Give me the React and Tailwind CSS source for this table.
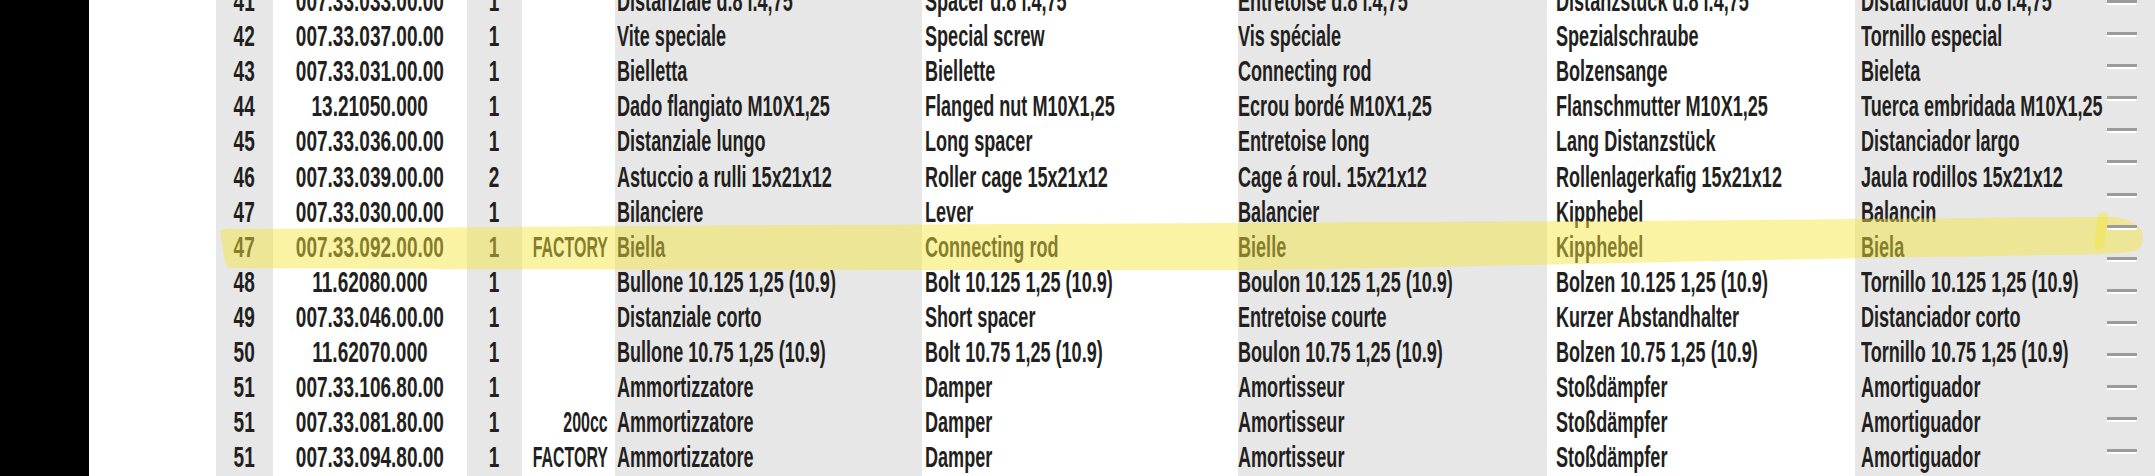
import React from "react";

const rows = [
  ["41", "007.33.033.00.00", "1", "", "Distanziale d.8 l.4,75", "Spacer d.8 l.4,75", "Entretoise d.8 l.4,75", "Distanzstück d.8 l.4,75", "Distanciador d.8 l.4,75"],
  ["42", "007.33.037.00.00", "1", "", "Vite speciale", "Special screw", "Vis spéciale", "Spezialschraube", "Tornillo especial"],
  ["43", "007.33.031.00.00", "1", "", "Bielletta", "Biellette", "Connecting rod", "Bolzensange", "Bieleta"],
  ["44", "13.21050.000", "1", "", "Dado flangiato M10X1,25", "Flanged nut M10X1,25", "Ecrou bordé M10X1,25", "Flanschmutter M10X1,25", "Tuerca embridada M10X1,25"],
  ["45", "007.33.036.00.00", "1", "", "Distanziale lungo", "Long spacer", "Entretoise long", "Lang Distanzstück", "Distanciador largo"],
  ["46", "007.33.039.00.00", "2", "", "Astuccio a rulli 15x21x12", "Roller cage 15x21x12", "Cage á roul. 15x21x12", "Rollenlagerkafig 15x21x12", "Jaula rodillos 15x21x12"],
  ["47", "007.33.030.00.00", "1", "", "Bilanciere", "Lever", "Balancier", "Kipphebel", "Balancin"],
  ["47", "007.33.092.00.00", "1", "FACTORY", "Biella", "Connecting rod", "Bielle", "Kipphebel", "Biela"],
  ["48", "11.62080.000", "1", "", "Bullone 10.125 1,25 (10.9)", "Bolt 10.125 1,25 (10.9)", "Boulon 10.125 1,25 (10.9)", "Bolzen 10.125 1,25 (10.9)", "Tornillo 10.125 1,25 (10.9)"],
  ["49", "007.33.046.00.00", "1", "", "Distanziale corto", "Short spacer", "Entretoise courte", "Kurzer Abstandhalter", "Distanciador corto"],
  ["50", "11.62070.000", "1", "", "Bullone 10.75 1,25 (10.9)", "Bolt 10.75 1,25 (10.9)", "Boulon 10.75 1,25 (10.9)", "Bolzen 10.75 1,25 (10.9)", "Tornillo 10.75 1,25 (10.9)"],
  ["51", "007.33.106.80.00", "1", "", "Ammortizzatore", "Damper", "Amortisseur", "Stoßdämpfer", "Amortiguador"],
  ["51", "007.33.081.80.00", "1", "200cc", "Ammortizzatore", "Damper", "Amortisseur", "Stoßdämpfer", "Amortiguador"],
  ["51", "007.33.094.80.00", "1", "FACTORY", "Ammortizzatore", "Damper", "Amortisseur", "Stoßdämpfer", "Amortiguador"],
];

const ALIGN = {
  center: ["justify-center", "origin-center"],
  right: ["justify-end", "origin-right"],
  left: ["justify-start", "origin-left"],
};

function Column({ idx, className, align, squeeze }) {
  const [justify, origin] = ALIGN[align];
  return (
    <div className={`flex flex-col shrink-0 ${className}`}>
      {rows.map((r, i) => (
        <div key={i} className={`h-[35.1px] flex items-center ${justify}`}>
          <span className={`inline-block whitespace-nowrap ${squeeze} ${origin}`}>{r[idx]}</span>
        </div>
      ))}
    </div>
  );
}

export default function App() {
  return (
    <div
      className="relative w-[2155px] h-[476px] overflow-hidden bg-white text-[29px] leading-none font-bold text-[#231f20]"
      style={{ fontFamily: '"Liberation Sans", Arial, sans-serif' }}
    >
      <div className="flex h-full">
        <div className="w-[89px] shrink-0 bg-black" />
        <div className="w-[127px] shrink-0 bg-white" />
        <div className="flex -mt-[16px] h-[492px]">
          <Column idx={0} align="center" squeeze="scale-x-[0.656]" className="w-[57px] bg-[#e7e7e7]" />
          <Column idx={1} align="center" squeeze="scale-x-[0.656]" className="w-[194px] bg-white" />
          <Column idx={2} align="center" squeeze="scale-x-[0.656]" className="w-[55px] bg-[#e7e7e7]" />
          <Column idx={3} align="right" squeeze="scale-x-[0.55]" className="w-[93px] bg-white pr-[7px]" />
          <Column idx={4} align="left" squeeze="scale-x-[0.623]" className="w-[307px] bg-[#e7e7e7] pl-[2px]" />
          <Column idx={5} align="left" squeeze="scale-x-[0.623]" className="w-[323px] bg-white pl-[3px]" />
          <Column idx={6} align="left" squeeze="scale-x-[0.623]" className="w-[309px] bg-[#e7e7e7] -ml-[7px] pl-0" />
          <Column idx={7} align="left" squeeze="scale-x-[0.623]" className="w-[308px] bg-white pl-[9px]" />
          <Column idx={8} align="left" squeeze="scale-x-[0.623]" className="w-[300px] bg-[#e7e7e7] pl-[6px]" />
        </div>
      </div>

      {/* marker highlight */}
      <svg className="absolute left-0 top-0 pointer-events-none" width="2155" height="476" viewBox="0 0 2155 476">
        <path
          d="M220 231 C 222 229, 228 228, 236 229 C 600 226, 1000 224, 1400 222 C 1700 221, 1950 218, 2110 217 C 2140 218, 2150 236, 2138 250 C 2120 256, 2060 254, 2000 256 C 1700 260, 1450 268, 1250 270 C 900 270, 600 270, 228 268 C 223 262, 224 250, 220 231 Z"
          fill="rgb(245,230,60)"
          fillOpacity="0.47"
        />
        <path
          d="M2098 214 C 2104 210, 2110 212, 2108 222 L 2104 246 C 2100 252, 2094 250, 2094 244 Z"
          fill="rgb(245,230,60)"
          fillOpacity="0.45"
        />
      </svg>

      {/* ruler ticks */}
      <div className="absolute right-[18px] top-0 flex flex-col w-[30px]">
        {Array.from({ length: 15 }).map((_, i) => (
          <div key={i} className="h-[32.1px] flex flex-col">
            <div className="h-[3px] bg-[#9b9b9b]" />
            <div className="h-[2px] bg-white" />
          </div>
        ))}
      </div>
    </div>
  );
}
